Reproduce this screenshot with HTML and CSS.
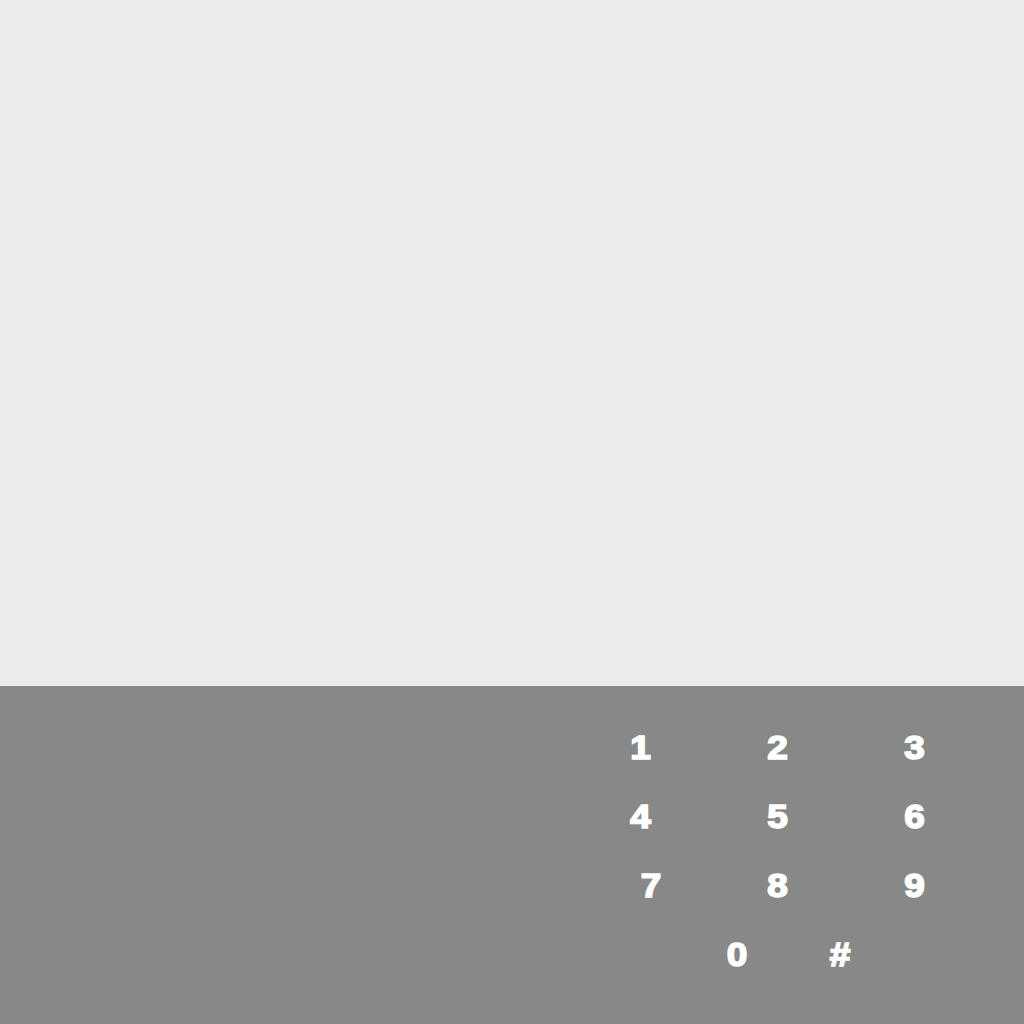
FILE: index.html
```html
<!DOCTYPE html>
<html>
<head>
<meta charset="utf-8">
<link rel="stylesheet" href="styles.css">
</head>
<body>
<div class="screen">
  <div class="display"></div>
  <div class="panel">
    <div class="keypad">
      <div class="key">1</div>
      <div class="key">2</div>
      <div class="key">3</div>
      <div class="key">4</div>
      <div class="key">5</div>
      <div class="key">6</div>
      <div class="key key-shift">7</div>
      <div class="key">8</div>
      <div class="key">9</div>
      <div class="last-row">
        <div class="key key-small">0</div>
        <div class="key key-small">#</div>
      </div>
    </div>
  </div>
</div>
</body>
</html>
```
FILE: styles.css
```css
html, body {
  margin: 0;
  padding: 0;
}
body {
  font-family: "Liberation Sans", Arial, sans-serif;
}
.screen {
  width: 1024px;
  height: 1024px;
  display: flex;
  flex-direction: column;
}
.display {
  height: 686px;
  background: #ebebeb;
}
.panel {
  flex: 1;
  background: #888888;
  display: flex;
  justify-content: flex-end;
  padding-top: 27px;
  box-sizing: border-box;
}
.keypad {
  width: 411px;
  display: grid;
  grid-template-columns: repeat(3, 137px);
  grid-auto-rows: 69px;
  align-content: start;
  margin-right: 41px;
}
.key {
  color: #ffffff;
  font-weight: bold;
  font-size: 33px;
  line-height: 69px;
  text-align: center;
  -webkit-text-stroke: 1.6px #ffffff;
  transform: scaleX(1.12);
}
.key-shift {
  padding-left: 19px;
}
.last-row {
  grid-column: 1 / -1;
  display: flex;
  padding-left: 135px;
  gap: 43px;
}
.key-small {
  width: 60px;
}
```
